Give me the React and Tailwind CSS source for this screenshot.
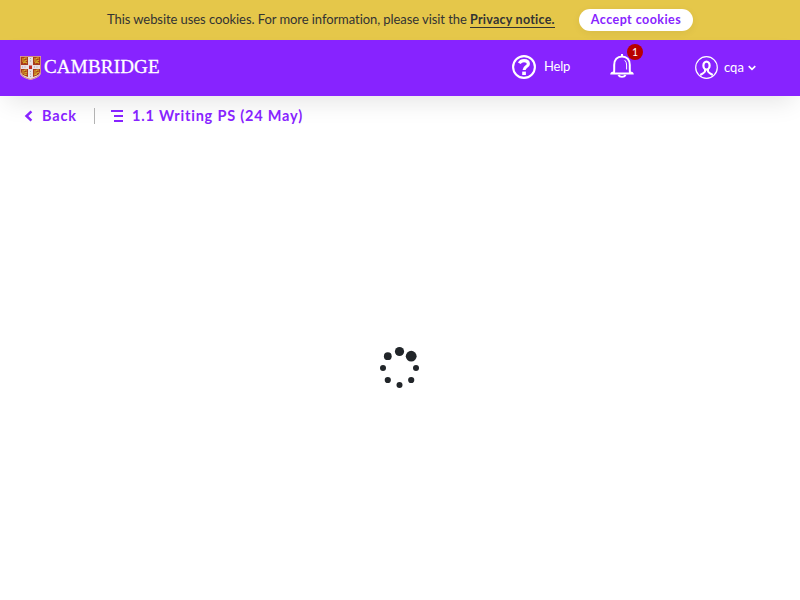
function Shield() {
  return (
    <svg className="h-6 w-[21px] shrink-0" viewBox="0 0 21 24">
      <path d="M0 0H21V16C21 20 17 22 10.5 24C4 22 0 20 0 16Z" fill="#e9dfe3" />
      <path d="M1 1H8V9H1ZM13 1H20V9H13ZM1 13H8V21L4 19.5Q1 18 1 15ZM13 13H20V15Q20 18 17 19.5L13 21Z" fill="#a83a1c" />
      <g fill="none" stroke="#d9b52c" strokeWidth="1.1">
        <path d="M2 3H4L5 2H7M2 5H5L7 4M3 7L5 6L7 7M14 3H16L17 2H19M14 5H17L19 4M15 7L17 6L19 7" />
        <path d="M2 15H4L5 14H7M2 17H5L7 16M4 19L7 18M14 15H16L17 14H19M14 17H17L19 16M14 19L17 18" />
      </g>
      <path d="M9 9.5H12V13H9Z" fill="#bd2a22" />
      <path d="M10.5 2V7M10.5 15V21M2 11H7M14 11H19" stroke="#aaa4ae" strokeWidth="1" strokeDasharray="1 1.5" />
      <path d="M.5 .5H20.5V16C20.5 19.5 17 21.5 10.5 23.4C4 21.5 .5 19.5 .5 16Z" fill="none" stroke="#cf7a65" strokeWidth=".8" />
    </svg>
  );
}

function HelpIcon() {
  return (
    <svg className="h-6 w-6" viewBox="0 0 24 24" fill="none" stroke="#fff">
      <circle cx="12" cy="12" r="10.9" strokeWidth="2.1" />
      <path d="M7.3 8.3C8.5 6.2 10 5.6 12 5.6C14.7 5.6 16.4 6.8 16.4 8.9C16.4 11.6 12.1 11.5 12.1 15" strokeWidth="3.1" />
      <path d="M10.2 16.6H13.9V20H10.2Z" fill="#fff" stroke="none" />
    </svg>
  );
}

function BellIcon() {
  return (
    <svg className="h-6 w-6" viewBox="0 0 24 24" fill="none" stroke="#fff">
      <path d="M12 0V3" strokeWidth="2" />
      <path d="M4 19C4.3 17.5 4.2 15 4.2 11C4.2 5.7 7.3 2.4 12 2.4C16.7 2.4 19.8 5.7 19.8 11C19.8 15 19.7 17.5 20 19" strokeWidth="2" />
      <path d="M.2 20.4Q.3 17.8 4 17.5V18.6H20V17.5Q23.7 17.8 23.8 20.4Z" fill="#fff" stroke="none" />
      <path d="M8.4 21Q9.4 22.9 12 22.9Q14.6 22.9 15.6 21" strokeWidth="1.9" />
      <path d="M14.7 6.2Q16.6 7.8 16.6 11V15.5" strokeWidth="1" />
    </svg>
  );
}

function UserIcon() {
  return (
    <svg className="h-[23px] w-[23px]" viewBox="0 0 23 23" fill="none" stroke="#fff">
      <circle cx="11.5" cy="11.5" r="10.8" strokeWidth="1.2" />
      <ellipse cx="11.5" cy="9.6" rx="3.1" ry="4" strokeWidth="2.2" />
      <path d="M10 13V15.4Q9.6 16.6 5.2 19M13 13V15.4Q13.4 16.6 17.8 19" strokeWidth="2" />
    </svg>
  );
}

const dots = [
  [29.5, 5.5, 4.6],
  [41.2, 10.2, 5.4],
  [46, 22, 3],
  [41.2, 34, 3.1],
  [29.5, 39, 3],
  [17.8, 34, 3.1],
  [13, 22, 3],
  [17.8, 10.2, 3.9],
];

function Spinner() {
  return (
    <svg className="h-[44px] w-[60px]" viewBox="0 0 60 44" fill="#212529">
      {dots.map(([x, y, r]) => (
        <circle key={`${x}-${y}`} cx={x} cy={y} r={r} />
      ))}
    </svg>
  );
}

export default function App() {
  return (
    <div className="flex h-[600px] w-[800px] flex-col overflow-hidden bg-white font-['Lato','Liberation_Sans',sans-serif]">
      <div className="flex h-10 shrink-0 items-center bg-[#e5c74a] pl-[107px] text-[13px] text-[#333]">
        <p className="w-[363px] whitespace-nowrap tracking-[-0.07px]">This website uses cookies. For more information, please visit the</p>
        <a className="w-[85px] whitespace-nowrap border-b border-[#333] text-[12.5px] leading-[15px] font-bold tracking-[0.25px]">Privacy notice.</a>
        <button className="ml-6 h-[22px] w-[114px] rounded-full bg-white text-[12.5px] leading-[22px] font-bold tracking-[0.45px] whitespace-nowrap text-[#8723ff] shadow-[0_2px_8px_rgba(0,0,0,0.06)]">Accept cookies</button>
      </div>
      <header className="flex h-14 shrink-0 items-center bg-[#8723ff] pl-5 text-[13px] text-white shadow-[0_12px_24px_-6px_rgba(0,0,0,0.1)]">
        <div className="flex w-[492px] items-center gap-[3px]">
          <Shield />
          <span className="pb-0.5 font-['Liberation_Serif',serif] text-[19px] leading-6 tracking-[0.2px] [-webkit-text-stroke:0.3px_#fff]">CAMBRIDGE</span>
        </div>
        <div className="flex w-[98px] items-center gap-2 pb-0.5">
          <HelpIcon />
          <span className="tracking-[-0.2px]">Help</span>
        </div>
        <div className="relative w-[85px] pb-1">
          <BellIcon />
          <span className="absolute -top-2.5 left-[17px] h-4 w-4 rounded-full bg-[#b80000] text-center text-[10.5px] leading-4">1</span>
        </div>
        <div className="flex items-center">
          <div className="pb-0.5">
            <UserIcon />
          </div>
          <span className="ml-1.5">cqa</span>
          <svg className="ml-1 h-2 w-2" viewBox="0 0 8 8" fill="none" stroke="#fff" strokeWidth="1.6">
            <path d="M.7 2.2L4 5.3L7.3 2.2" />
          </svg>
        </div>
      </header>
      <nav className="flex h-10 shrink-0 items-center pl-6 text-[14.5px] font-bold whitespace-nowrap text-[#8723ff]">
        <svg className="h-3 w-[9px]" viewBox="0 0 9 12" fill="none" stroke="currentColor" strokeWidth="2.5">
          <path d="M7.4 1.3L2.5 6L7.4 10.7" />
        </svg>
        <span className="ml-[9px] w-[52px] pb-px tracking-[0.8px]">Back</span>
        <span className="h-4 w-px bg-[#b3b3b3]" />
        <svg className="ml-4 h-3 w-[13px]" viewBox="0 0 13 12" fill="currentColor">
          <path d="M0 0H12V2H0ZM3 5H12V7H3ZM3 10H12V12H3Z" />
        </svg>
        <span className="ml-2 pb-px tracking-[0.8px]">1.1 Writing PS (24 May)</span>
      </nav>
      <main className="flex grow flex-col items-center pt-[210px]">
        <Spinner />
      </main>
    </div>
  );
}
